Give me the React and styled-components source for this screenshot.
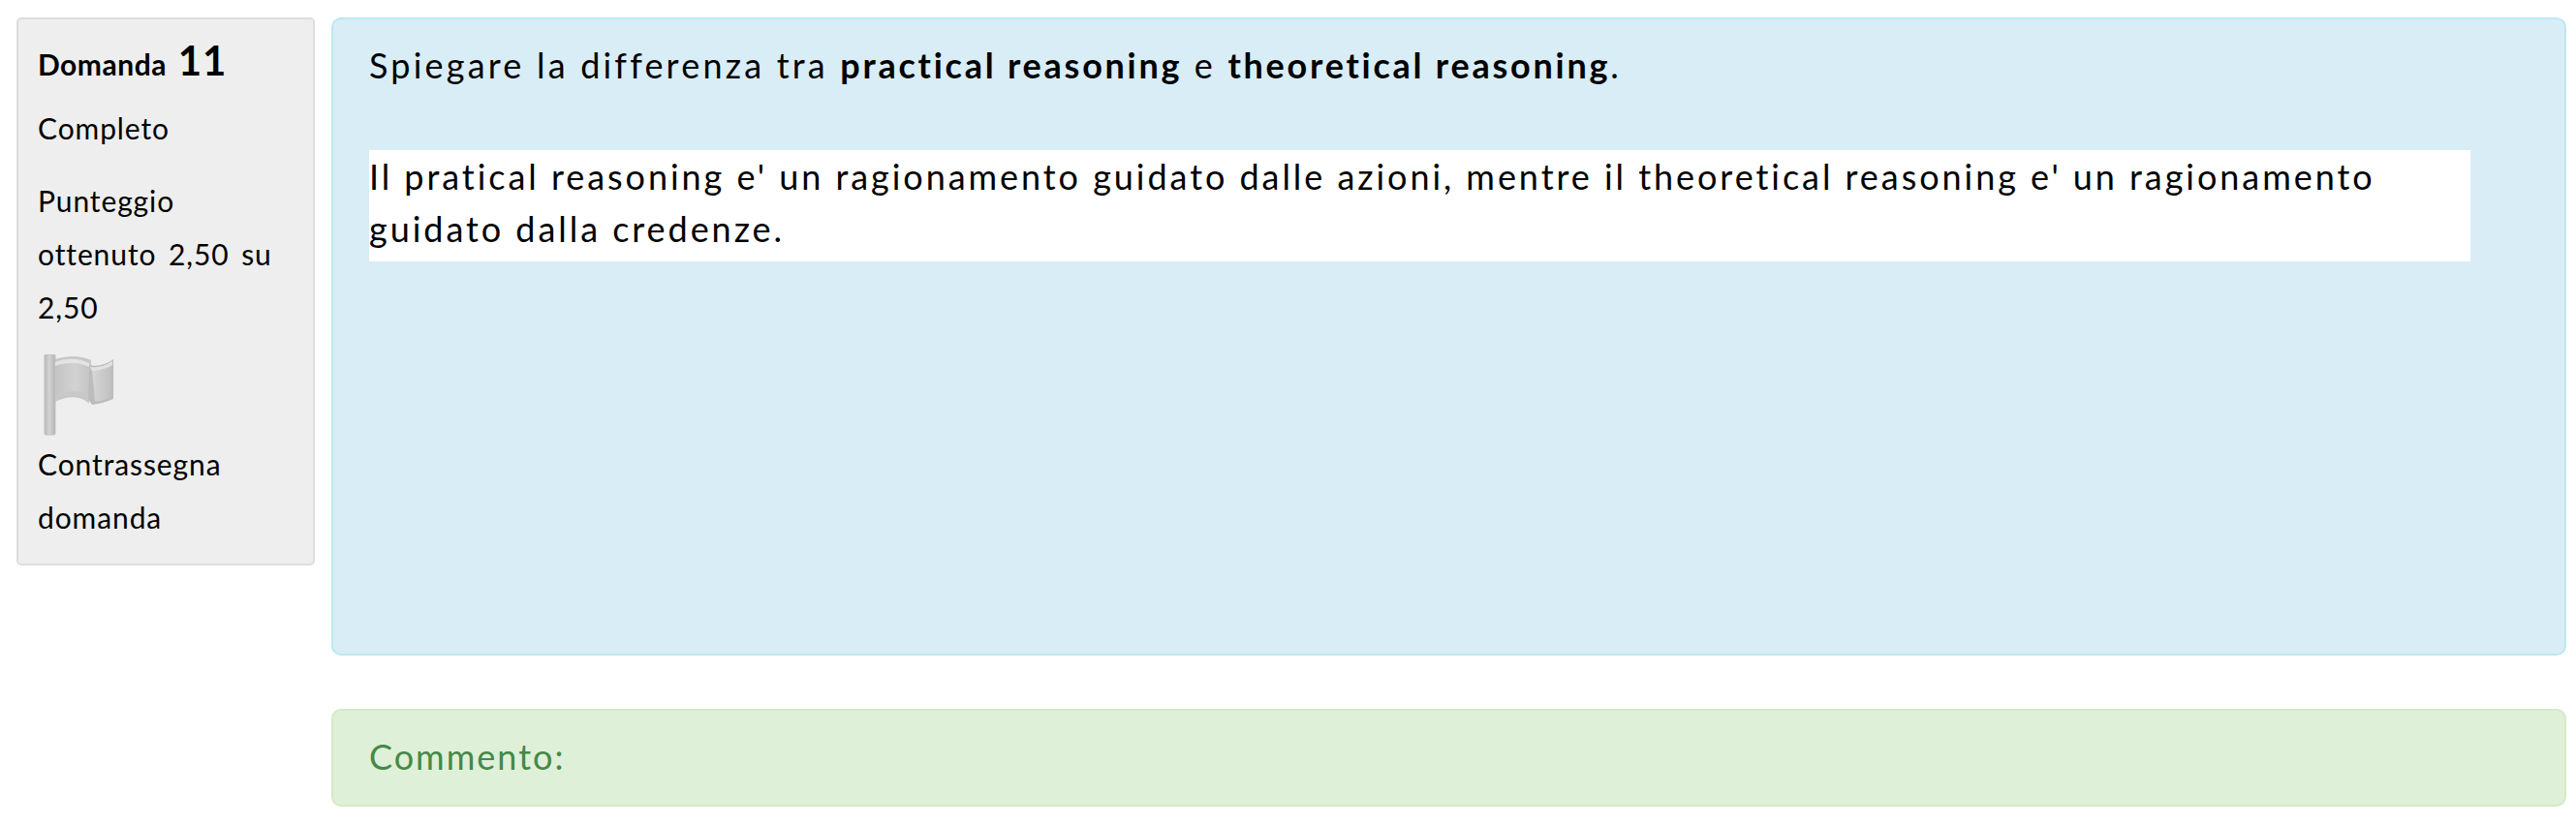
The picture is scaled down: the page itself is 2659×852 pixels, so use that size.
import React from 'react';
import styled, { createGlobalStyle } from 'styled-components';

const GlobalStyle = createGlobalStyle`
  html, body {
    margin: 0;
    background: #fff;
  }
  body {
    font-family: "Lato", "Open Sans", sans-serif;
    color: #000;
  }
`;

const Question = styled.div`
  display: flex;
  align-items: flex-start;
  gap: 17px;
  padding: 18px 10px 0 17px;
`;

const Info = styled.div`
  box-sizing: border-box;
  flex: 0 0 308px;
  height: 566px;
  padding: 20px 20px 0;
  background: #eee;
  border: 2px solid #ddd;
  border-radius: 5px;
  font-size: 30px;
  line-height: 55px;
  letter-spacing: 0.9px;
  word-spacing: 4px;
`;

const Title = styled.h3`
  margin: -3px 0 14px;
  font-size: 30px;
  line-height: 50px;
  font-weight: 700;
  letter-spacing: 0.5px;
  word-spacing: 0;
`;

const QNumber = styled.span`
  font-size: 42px;
  margin-left: 4px;
  letter-spacing: 1px;
`;

const State = styled.div`
  margin-bottom: 20px;
`;

const Flag = styled.svg`
  display: block;
  width: 74px;
  height: 86px;
  margin: 21px 0 0 6px;
`;

const Content = styled.div`
  flex: 1;
  display: flex;
  flex-direction: column;
  gap: 55px;
  min-width: 0;
`;

const Formulation = styled.div`
  box-sizing: border-box;
  height: 659px;
  padding: 20px 37px;
  background: #d9edf7;
  border: 2px solid #bce8f1;
  border-radius: 10px;
  font-size: 36px;
  line-height: 54px;
`;

const Prompt = styled.p`
  margin: 0 0 61px;
  letter-spacing: 3.2px;

  strong {
    letter-spacing: 2.75px;
  }
`;

const Answer = styled.div`
  width: 2169px;
  height: 115px;
  background: #fff;
  letter-spacing: 2.95px;
`;

const Feedback = styled.div`
  box-sizing: border-box;
  height: 101px;
  padding: 20px 37px;
  background: #dff0d8;
  border: 2px solid #d6e9c6;
  border-radius: 10px;
  color: #468847;
  font-size: 36px;
  line-height: 54px;
  letter-spacing: 2px;
`;

const FlagIcon = () => (
  <Flag viewBox="0 0 74 86">
    <defs>
      <linearGradient id="pole" x1="0" x2="1" y1="0" y2="0">
        <stop offset="0" stopColor="#b6b6b6" />
        <stop offset="0.45" stopColor="#d4d4d4" />
        <stop offset="1" stopColor="#b4b4b4" />
      </linearGradient>
      <linearGradient id="cloth" x1="0" x2="1" y1="0" y2="0">
        <stop offset="0" stopColor="#c4c4c4" />
        <stop offset="0.6" stopColor="#d2d2d2" />
        <stop offset="1" stopColor="#c6c6c6" />
      </linearGradient>
      <linearGradient id="fold" x1="0" x2="1" y1="0" y2="0">
        <stop offset="0" stopColor="#d6d6d6" />
        <stop offset="1" stopColor="#c0c0c0" />
      </linearGradient>
      <filter id="soft" x="-15%" y="-15%" width="130%" height="130%">
        <feGaussianBlur stdDeviation="0.6" />
      </filter>
    </defs>
    <g filter="url(#soft)">
      <rect x="1" y="0" width="11" height="83" rx="1.5" fill="url(#pole)" stroke="#c0c0c0" />
      <path d="M12 5 C24 1 38 1 49 6 L47 51 C38 42 24 43 12 49 Z" fill="#c8c8c8" />
      <path d="M47 11 C55 13 64 11 72 5 L72 46 C65 49 58 51 50 52 L46 46 Z" fill="#bcbcbc" />
      <path d="M12 8 C24 3 37 4 47 9 L47 13 C37 8 24 8 12 12 Z" fill="#e4e4e4" />
      <path d="M12 12 C24 8 37 8 46 13 L46 42 C36 36 24 37 12 43 Z" fill="url(#cloth)" />
      <path d="M50 17 C57 17 64 15 70 11 L70 44 C64 47 58 49 53 48 Z" fill="url(#fold)" />
      <path d="M48 13 C56 14 64 12 71 7 L71 11 C64 15 56 17 50 17 Z" fill="#e2e2e2" />
    </g>
  </Flag>
);

const App = () => (
  <>
    <GlobalStyle />
    <Question>
      <Info>
        <Title>Domanda <QNumber>11</QNumber></Title>
        <State>Completo</State>
        <div>Punteggio ottenuto 2,50 su 2,50</div>
        <FlagIcon />
        <div>Contrassegna domanda</div>
      </Info>
      <Content>
        <Formulation>
          <Prompt>
            Spiegare la differenza tra <strong>practical reasoning</strong> e <strong>theoretical reasoning</strong>.
          </Prompt>
          <Answer>
            Il pratical reasoning e' un ragionamento guidato dalle azioni, mentre il theoretical reasoning e' un ragionamento guidato dalla credenze.
          </Answer>
        </Formulation>
        <Feedback>Commento:</Feedback>
      </Content>
    </Question>
  </>
);

export default App;
